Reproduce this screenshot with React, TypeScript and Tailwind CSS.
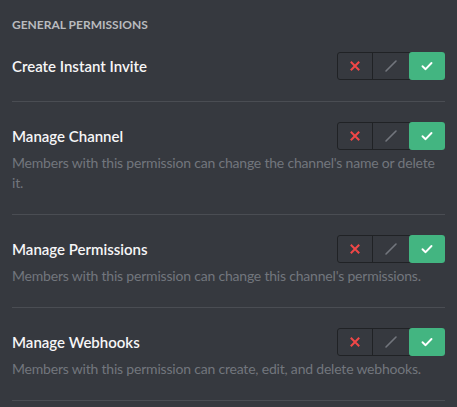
const permissions = [
  { name: 'Create Instant Invite' },
  {
    name: 'Manage Channel',
    description: "Members with this permission can change the channel's name or delete it.",
  },
  {
    name: 'Manage Permissions',
    description: "Members with this permission can change this channel's permissions.",
  },
  {
    name: 'Manage Webhooks',
    description: 'Members with this permission can create, edit, and delete webhooks.',
  },
];

function PermissionToggle() {
  return (
    <div className="flex h-[28px] w-[108px] shrink-0 rounded-[3px] border border-[#202225]">
      <div className="flex w-[35px] items-center justify-center border-r border-[#202225]">
        <svg width="12" height="12" viewBox="0 0 12 12">
          <path d="M2.5 2.5L9.5 9.5M9.5 2.5L2.5 9.5" stroke="#f04747" strokeWidth="2" strokeLinecap="square" />
        </svg>
      </div>
      <div className="flex w-[36px] items-center justify-center">
        <svg width="14" height="14" viewBox="0 0 14 14">
          <path d="M2 12L12 2" stroke="#72767d" strokeWidth="1.6" strokeLinecap="round" />
        </svg>
      </div>
      <div className="-my-px -mr-px flex flex-1 items-center justify-center rounded-[3px] bg-[#43b581]">
        <svg width="14" height="14" viewBox="0 0 14 14">
          <path d="M2.5 7.2L5.6 10.2L11.5 4" fill="none" stroke="#ffffff" strokeWidth="1.9" strokeLinecap="round" strokeLinejoin="round" />
        </svg>
      </div>
    </div>
  );
}

export default function App() {
  return (
    <div
      className="min-h-[407px] bg-[#36393f] px-3 pt-[17px]"
      style={{ fontFamily: 'Lato, "Noto Sans", sans-serif' }}
    >
      <h2 className="mb-[19px] text-[12px] leading-4 font-bold text-[#b9bbbe] uppercase">
        General Permissions
      </h2>
      <div>
        {permissions.map((p, i) => (
          <div
            key={p.name}
            className={`border-b border-[#4a4d53] pb-[21px] ${i === 0 ? '' : 'pt-5'}`}
          >
            <div className="flex h-[28px] items-center justify-between">
              <span className="text-[15px] font-semibold text-[#f6f6f7]">{p.name}</span>
              <PermissionToggle />
            </div>
            {p.description && (
              <p className="mt-[3px] text-[14px] leading-5 tracking-[-0.2px] text-[#72767d]">
                {p.description}
              </p>
            )}
          </div>
        ))}
      </div>
    </div>
  );
}
